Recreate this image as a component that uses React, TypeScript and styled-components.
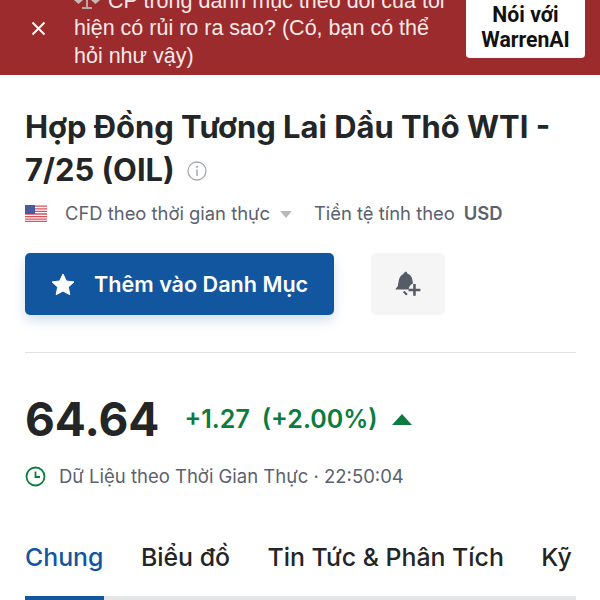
import React from 'react';
import styled, { createGlobalStyle } from 'styled-components';

const GlobalStyle = createGlobalStyle`
  html, body {
    margin: 0;
    padding: 0;
    background: #ffffff;
    font-family: Inter, "Liberation Sans", sans-serif;
  }
`;

const Page = styled.div`
  width: 600px;
  height: 600px;
  overflow: hidden;
  background: #ffffff;
  color: #232526;
`;

const Banner = styled.div`
  height: 75px;
  background: #9c2b2d;
  display: flex;
  align-items: flex-end;
  overflow: hidden;
`;

const CloseButton = styled.div`
  align-self: flex-start;
  width: 74px;
  flex: none;
  height: 56px;
  padding-left: 31px;
  box-sizing: border-box;
  display: flex;
  align-items: center;
  color: #ffffff;
`;

const BannerText = styled.div`
  width: 372px;
  flex: none;
  font-family: "Liberation Sans", Arial, sans-serif;
  font-size: 21.5px;
  line-height: 27.5px;
  color: #f7e9e9;
  padding-bottom: 5px;
`;

const ScaleIcon = styled.svg`
  width: 26px;
  height: 24px;
  vertical-align: -3px;
  margin-right: 8px;
`;

const TalkButton = styled.div`
  align-self: flex-start;
  flex: none;
  margin-left: 20px;
  margin-top: -18px;
  width: 119px;
  height: 76px;
  background: #ffffff;
  border-radius: 4px;
  color: #111111;
  font-family: Roboto, "Liberation Sans", sans-serif;
  font-size: 21.2px;
  font-weight: 700;
  line-height: 25px;
  text-align: center;
  display: flex;
  flex-direction: column;
  justify-content: flex-end;
  padding-bottom: 6px;
  box-sizing: border-box;
`;

const Content = styled.div`
  padding: 30px 24px 0 25px;
`;

const Title = styled.h1`
  margin: 0;
  font-size: 30.9px;
  line-height: 43px;
  font-weight: 700;
  color: #232526;
`;

const InfoIcon = styled.svg`
  width: 20px;
  height: 20px;
  margin-left: 12px;
  vertical-align: 0;
`;

const MetaRow = styled.div`
  display: flex;
  align-items: center;
  height: 24px;
  margin-top: 10px;
  font-size: 18.4px;
  color: #5b616e;
`;

const Flag = styled.svg`
  width: 22px;
  height: 17px;
  margin-right: 18px;
`;

const Caret = styled.span`
  width: 0;
  height: 0;
  border-left: 6px solid transparent;
  border-right: 6px solid transparent;
  border-top: 7px solid #b5b9c0;
  margin: 2px 22px 0 10px;
`;

const Currency = styled.b`
  margin-left: 9px;
  font-weight: 600;
`;

const Actions = styled.div`
  display: flex;
  gap: 37px;
  margin-top: 28px;
  padding-bottom: 37px;
  border-bottom: 1px solid #e0e3e6;
`;

const WatchButton = styled.div`
  width: 309px;
  height: 62px;
  border-radius: 5px;
  background: #1256a0;
  color: #ffffff;
  display: flex;
  align-items: center;
  padding-left: 26px;
  box-sizing: border-box;
  gap: 19px;
  font-size: 21.6px;
  font-weight: 600;
  box-shadow: 0 6px 12px rgba(18, 86, 160, 0.18);
`;

const BellButton = styled.div`
  width: 74px;
  height: 62px;
  border-radius: 5px;
  background: #f5f5f6;
  display: flex;
  align-items: center;
  justify-content: center;
`;

const PriceRow = styled.div`
  display: flex;
  align-items: center;
  margin-top: 33px;
  height: 66px;
`;

const Price = styled.span`
  font-size: 46px;
  font-weight: 700;
  color: #232526;
`;

const Change = styled.span<{ $gap: number }>`
  margin-left: ${p => p.$gap}px;
  font-size: 25px;
  font-weight: 600;
  color: #0a7d3e;
`;

const UpArrow = styled.span`
  width: 0;
  height: 0;
  margin-left: 14px;
  border-left: 10px solid transparent;
  border-right: 10px solid transparent;
  border-bottom: 11px solid #0a7d3e;
`;

const TimeRow = styled.div`
  display: flex;
  align-items: center;
  gap: 13px;
  margin-top: 13px;
  font-size: 18.5px;
  color: #5b616e;
`;

const Tabs = styled.div`
  display: flex;
  gap: 37.5px;
  margin-top: 55px;
  font-size: 24.85px;
  font-weight: 500;
  white-space: nowrap;
  overflow: hidden;
`;

const Tab = styled.span<{ $active?: boolean }>`
  color: ${p => (p.$active ? '#1256a0' : '#232526')};
`;

const TabTrack = styled.div`
  height: 5px;
  margin-top: 24px;
  background: #e4e7ea;
`;

const TabIndicator = styled.div`
  width: 79px;
  height: 5px;
  background: #1256a0;
`;

const App: React.FC = () => {
  return (
    <Page>
      <GlobalStyle />
      <Banner>
        <CloseButton>
          <svg width="15" height="15" viewBox="0 0 15 15">
            <path d="M1.5 1.5 13.5 13.5M13.5 1.5 1.5 13.5" stroke="#fff" strokeWidth="2" fill="none" />
          </svg>
        </CloseButton>
        <BannerText>
          <ScaleIcon viewBox="0 0 26 24">
            <path d="M13 1v19M4 5h18M8 21h10" stroke="#b9a9a6" strokeWidth="2" fill="none" />
            <path d="M0 13h9l-4.500 4zM17 13h9l-4.500 4z" fill="#c9b9b5" />
          </ScaleIcon>
          CP trong danh mục theo dõi của tôi hiện có rủi ro ra sao? (Có, bạn có thể hỏi như vậy)
        </BannerText>
        <TalkButton>
          <span>Nói với</span>
          <span>WarrenAI</span>
        </TalkButton>
      </Banner>
      <Content>
        <Title>
          Hợp Đồng Tương Lai Dầu Thô WTI - 7/25 (OIL)
          <InfoIcon viewBox="0 0 20 20">
            <circle cx="10" cy="10" r="9" stroke="#a4a8ae" strokeWidth="1.300" fill="none" />
            <circle cx="10" cy="5.800" r="1.100" fill="#a4a8ae" />
            <path d="M10 8.500v6.500" stroke="#a4a8ae" strokeWidth="1.500" />
          </InfoIcon>
        </Title>
        <MetaRow>
          <Flag viewBox="0 0 22 17">
            <rect width="22" height="17" fill="#fff" />
            <path d="M0 1.200h22M0 3.800h22M0 6.400h22M0 9h22M0 11.600h22M0 14.200h22M0 16.400h22" stroke="#d8525f" strokeWidth="1.300" />
            <rect width="10" height="9" fill="#4a5a9a" />
          </Flag>
          CFD theo thời gian thực
          <Caret />
          Tiền tệ tính theo
          <Currency>USD</Currency>
        </MetaRow>
        <Actions>
          <WatchButton>
            <svg width="24" height="23" viewBox="0 0 24 23">
              <path d="M12 1l3.300 7 7.700.9-5.700 5.200 1.500 7.600L12 18l-6.800 3.700 1.500-7.600L1 8.900 8.700 8z" fill="#fff" stroke="#fff" strokeLinejoin="round" />
            </svg>
            Thêm vào Danh Mục
          </WatchButton>
          <BellButton>
            <svg width="28" height="28" viewBox="0 0 26 26">
              <path d="M10.500 1.500c1 0 1.700.7 1.800 1.700 3 .9 4.300 3.200 4.800 6l.5 3.300a7 7 0 0 0-4 5.500H1.500c0-1.200 1.500-1.700 2-3.200l1-5.500c.5-2.600 1.900-4.800 4.300-5.700.1-1 .8-1.600 1.700-1.600z" fill="#565b68" />
              <path d="M9 20l3 3" stroke="#565b68" strokeWidth="2" />
              <path d="M19 13v11M13.500 18.500h11" stroke="#565b68" strokeWidth="2.400" />
            </svg>
          </BellButton>
        </Actions>
        <PriceRow>
          <Price>64.64</Price>
          <Change $gap={25}>+1.27</Change>
          <Change $gap={12}>(+2.00%)</Change>
          <UpArrow />
        </PriceRow>
        <TimeRow>
          <svg width="21" height="21" viewBox="0 0 21 21">
            <circle cx="10.500" cy="10.500" r="9" stroke="#0a7d3e" strokeWidth="1.800" fill="none" />
            <path d="M10.500 5.500v5.500h4.500" stroke="#0a7d3e" strokeWidth="1.800" fill="none" />
          </svg>
          Dữ Liệu theo Thời Gian Thực · 22:50:04
        </TimeRow>
        <Tabs>
          <Tab $active>Chung</Tab>
          <Tab>Biểu đồ</Tab>
          <Tab>Tin Tức &amp; Phân Tích</Tab>
          <Tab>Kỹ</Tab>
        </Tabs>
        <TabTrack>
          <TabIndicator />
        </TabTrack>
      </Content>
    </Page>
  );
};

export default App;
